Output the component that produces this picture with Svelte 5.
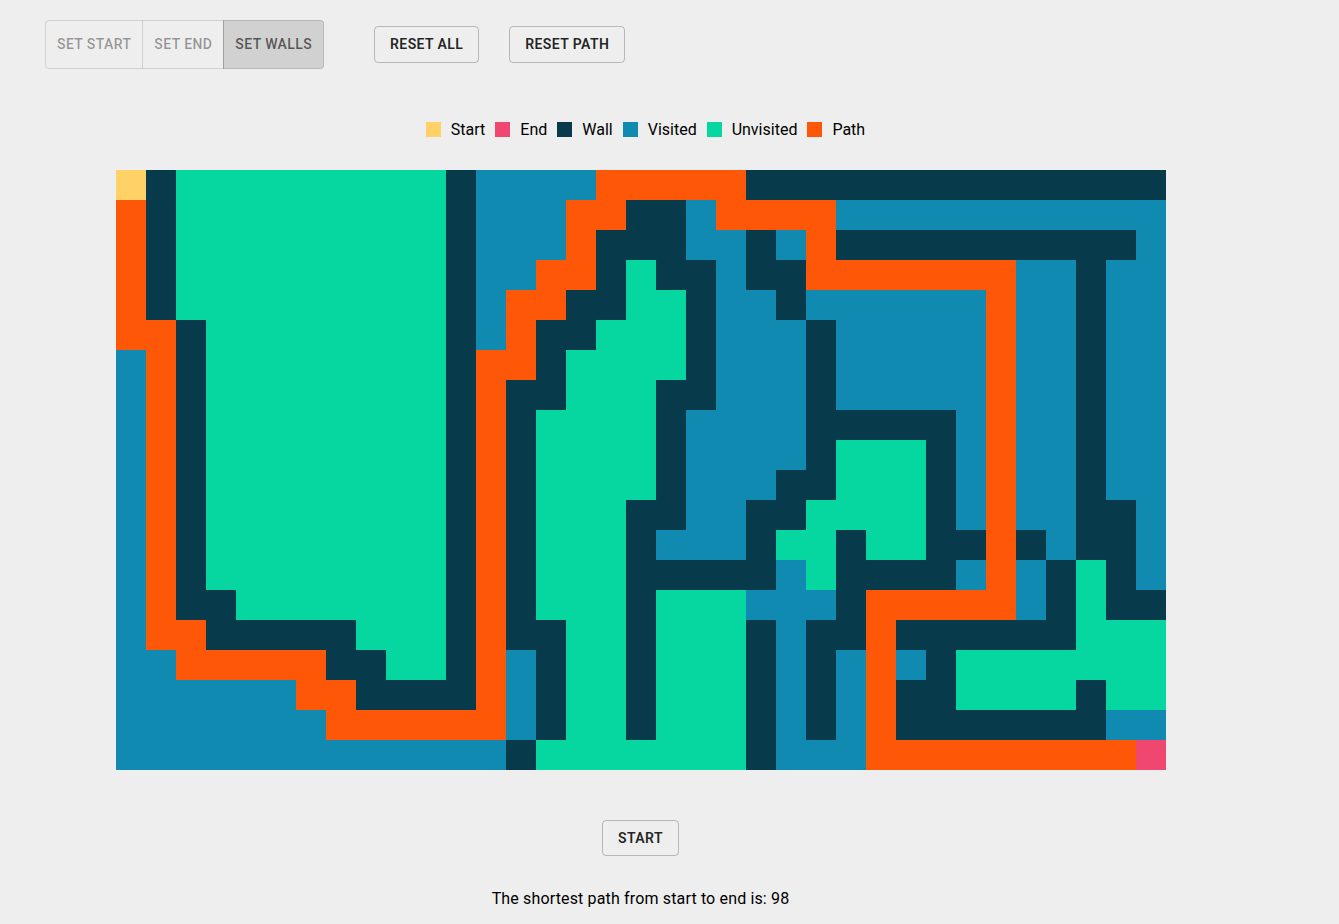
<script>
  // each row is run-length coded: letter + count
  const rows = [
    's1 w1 u9 w1 v4 p5 w14',
    'p1 w1 u9 w1 v3 p2 w2 v1 p4 v11',
    'p1 w1 u9 w1 v3 p1 w3 v2 w1 v1 p1 w10 v1',
    'p1 w1 u9 w1 v2 p2 w1 u1 w2 v1 w2 p7 v2 w1 v2',
    'p1 w1 u9 w1 v1 p2 w2 u2 w1 v2 w1 v6 p1 v2 w1 v2',
    'p2 w1 u8 w1 v1 p1 w2 u3 w1 v3 w1 v5 p1 v2 w1 v2',
    'v1 p1 w1 u8 w1 p2 w1 u4 w1 v3 w1 v5 p1 v2 w1 v2',
    'v1 p1 w1 u8 w1 p1 w2 u3 w2 v3 w1 v5 p1 v2 w1 v2',
    'v1 p1 w1 u8 w1 p1 w1 u4 w1 v4 w5 v1 p1 v2 w1 v2',
    'v1 p1 w1 u8 w1 p1 w1 u4 w1 v4 w1 u3 w1 v1 p1 v2 w1 v2',
    'v1 p1 w1 u8 w1 p1 w1 u4 w1 v3 w2 u3 w1 v1 p1 v2 w1 v2',
    'v1 p1 w1 u8 w1 p1 w1 u3 w2 v2 w2 u4 w1 v1 p1 v2 w2 v1',
    'v1 p1 w1 u8 w1 p1 w1 u3 w1 v3 w1 u2 w1 u2 w2 p1 w1 v1 w2 v1',
    'v1 p1 w1 u8 w1 p1 w1 u3 w5 v1 u1 w4 v1 p1 v1 w1 u1 w1 v1',
    'v1 p1 w2 u7 w1 p1 w1 u3 w1 u3 v3 w1 p5 v1 w1 u1 w2',
    'v1 p2 w5 u3 w1 p1 w2 u2 w1 u3 w1 v1 w2 p1 w6 u3',
    'v2 p5 w2 u2 w1 p1 v1 w1 u2 w1 u3 w1 v1 w1 v1 p1 v1 w1 u7',
    'v6 p2 w4 p1 v1 w1 u2 w1 u3 w1 v1 w1 v1 p1 w2 u4 w1 u2',
    'v7 p6 v1 w1 u2 w1 u3 w1 v1 w1 v1 p1 w7 v2',
    'v13 w1 u7 w1 v3 p9 e1'
  ];

  const cells = rows.flatMap((row) =>
    row.split(' ').flatMap((run) => Array(Number(run.slice(1))).fill(run[0]))
  );

  const legend = [
    { label: 'Start', kind: 's' },
    { label: 'End', kind: 'e' },
    { label: 'Wall', kind: 'w' },
    { label: 'Visited', kind: 'v' },
    { label: 'Unvisited', kind: 'u' },
    { label: 'Path', kind: 'p' }
  ];
</script>

<div class="page">
  <div class="toolbar">
    <div class="toggle-group">
      <button class="toggle">Set start</button>
      <button class="toggle">Set end</button>
      <button class="toggle selected">Set walls</button>
    </div>
    <button class="btn reset-all">Reset all</button>
    <button class="btn reset-path">Reset path</button>
  </div>

  <ul class="legend">
    {#each legend as item}
      <li>
        <span class="swatch {item.kind}"></span>
        {item.label}
      </li>
    {/each}
  </ul>

  <div class="grid">
    {#each cells as kind}
      <div class={kind}></div>
    {/each}
  </div>

  <div class="actions">
    <button class="btn">Start</button>
  </div>

  <p class="result">The shortest path from start to end is: 98</p>
</div>

<style>
  :global(html), :global(body) {
    background: #eeeeee;
  }

  :global(body) {
    font-family: Roboto, sans-serif;
    color: rgba(0, 0, 0, 0.87);
  }

  .page {
    width: 1281px;
    padding-top: 20px;
    background: #eeeeee;
  }

  .toolbar {
    display: flex;
    align-items: center;
    padding-left: 45px;
  }

  button {
    font-family: Roboto, sans-serif;
    font-size: 14px;
    font-weight: 600;
    line-height: 1.75;
    letter-spacing: 0.02857em;
    text-transform: uppercase;
    background: transparent;
    cursor: pointer;
  }

  .toggle-group {
    display: inline-flex;
  }

  .toggle {
    padding: 11px;
    font-weight: 500;
    color: rgba(0, 0, 0, 0.38);
    border: 1px solid rgba(0, 0, 0, 0.12);
  }

  .toggle:first-child {
    border-radius: 4px 0 0 4px;
  }

  .toggle:not(:first-child) {
    margin-left: -1px;
    border-left-color: transparent;
  }

  .toggle:last-child {
    border-radius: 0 4px 4px 0;
  }

  .toggle.selected {
    color: rgba(0, 0, 0, 0.6);
    background: rgba(0, 0, 0, 0.12);
    border-left-color: rgba(0, 0, 0, 0.12);
  }

  .btn {
    padding: 5px 15px;
    color: rgba(0, 0, 0, 0.87);
    border: 1px solid rgba(0, 0, 0, 0.23);
    border-radius: 4px;
  }

  .reset-all {
    margin-left: 50px;
  }

  .reset-path {
    margin-left: 30px;
  }

  .legend {
    display: flex;
    justify-content: center;
    margin: 51px 0 0;
    padding: 0;
    list-style: none;
    font-size: 16px;
    line-height: 19px;
    color: #000;
  }

  .legend li {
    display: flex;
    align-items: center;
    gap: 10px;
    padding-left: 10px;
  }

  .swatch {
    width: 15px;
    height: 15px;
  }

  .grid {
    display: grid;
    grid-template-columns: repeat(35, 30px);
    grid-auto-rows: 30px;
    margin: 31px 0 0 116px;
  }

  .s { background: #ffd166; }
  .e { background: #ef476f; }
  .w { background: #073b4c; }
  .v { background: #118ab2; }
  .u { background: #06d6a0; }
  .p { background: #ff5708; }

  .actions {
    display: flex;
    justify-content: center;
    margin-top: 50px;
  }

  .result {
    margin: 33px 0 0;
    font-size: 16px;
    line-height: 19px;
    letter-spacing: 0.00938em;
    text-align: center;
    color: #000;
  }
</style>
